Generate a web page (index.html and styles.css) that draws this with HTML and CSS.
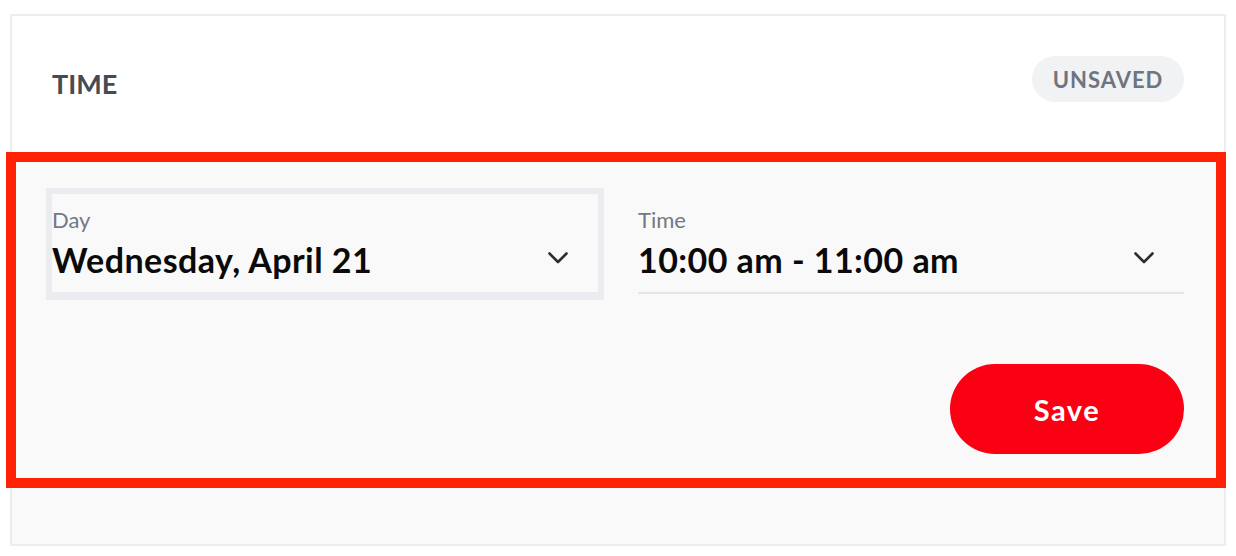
FILE: index.html
```html
<!DOCTYPE html>
<html lang="en">
<head>
<meta charset="utf-8">
<title>Time</title>
<link rel="stylesheet" href="styles.css">
</head>
<body>
<div class="card">
  <header class="card-head">
    <h2 class="card-title">TIME</h2>
    <span class="pill">UNSAVED</span>
  </header>
  <section class="card-body">
    <div class="fields">
      <div class="field field-focused">
        <span class="field-label">Day</span>
        <div class="field-row">
          <span class="field-value">Wednesday, April 21</span>
          <svg class="chevron" viewBox="0 0 20 12" width="20" height="12" aria-hidden="true"><path d="M1.5 1.5 L10 10 L18.5 1.5" fill="none" stroke="#2b2d31" stroke-width="2.6" stroke-linecap="round" stroke-linejoin="round"/></svg>
        </div>
      </div>
      <div class="field">
        <span class="field-label">Time</span>
        <div class="field-row">
          <span class="field-value">10:00 am - 11:00 am</span>
          <svg class="chevron" viewBox="0 0 20 12" width="20" height="12" aria-hidden="true"><path d="M1.5 1.5 L10 10 L18.5 1.5" fill="none" stroke="#2b2d31" stroke-width="2.6" stroke-linecap="round" stroke-linejoin="round"/></svg>
        </div>
      </div>
    </div>
    <div class="actions">
      <button class="btn-save" type="button">Save</button>
    </div>
    <div class="highlight"></div>
  </section>
</div>
</body>
</html>
```

FILE: styles.css
```css
html, body {
  margin: 0;
  padding: 0;
  background: #ffffff;
}

body {
  font-family: Lato, "Noto Sans", sans-serif;
}

.card {
  box-sizing: border-box;
  width: 1216px;
  height: 532px;
  margin: 14px 0 0 10px;
  border: 2px solid #ededed;
  background: #ffffff;
  display: flex;
  flex-direction: column;
}

.card-head {
  height: 136px;
  padding: 0 40px;
  display: flex;
  align-items: center;
  justify-content: space-between;
}

.card-title {
  margin: 0;
  font-size: 27px;
  line-height: 32px;
  font-weight: 700;
  letter-spacing: 0;
  color: #464a53;
}

.pill {
  box-sizing: border-box;
  height: 46px;
  width: 152px;
  margin-bottom: 10px;
  border-radius: 23px;
  background: #f1f2f4;
  color: #6f7480;
  font-size: 22px;
  font-weight: 700;
  letter-spacing: 1px;
  display: flex;
  align-items: center;
  justify-content: center;
}

.card-body {
  position: relative;
  flex: 1;
  background: #f9f9f9;
  padding: 42px 40px 90px;
  display: flex;
  flex-direction: column;
}

.fields {
  display: flex;
  gap: 40px;
}

.field {
  box-sizing: border-box;
  flex: 1;
  height: 100px;
  padding-top: 13px;
  border-bottom: 2px solid #e3e5e9;
  display: flex;
  flex-direction: column;
}

.field-focused {
  border-bottom-color: #ebecef;
  box-shadow: 0 0 0 6px #ebecef;
}

.field-label {
  font-size: 22px;
  line-height: 26px;
  color: #737886;
}

.field-row {
  display: flex;
  align-items: center;
  justify-content: space-between;
  padding-right: 30px;
  margin-top: 7px;
  height: 40px;
}

.field-value {
  font-size: 34px;
  line-height: 40px;
  font-weight: 700;
  letter-spacing: 0.45px;
  color: #0a0a0a;
}

.chevron {
  display: block;
  margin-top: -4px;
}

.actions {
  margin-top: 70px;
  display: flex;
  justify-content: flex-end;
}

.btn-save {
  width: 234px;
  height: 90px;
  border: none;
  border-radius: 45px;
  background: #fb0012;
  color: #ffffff;
  font-family: Lato, "Noto Sans", sans-serif;
  font-size: 29px;
  font-weight: 700;
  letter-spacing: 1.5px;
  padding: 0;
}

.highlight {
  position: absolute;
  left: -6px;
  top: 0;
  width: 1220px;
  height: 336px;
  box-sizing: border-box;
  border: 10px solid #ff2207;
  pointer-events: none;
}
```
